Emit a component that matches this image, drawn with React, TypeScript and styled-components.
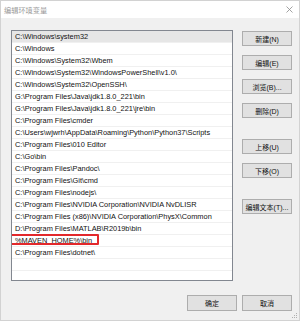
import React from 'react';
import styled, { createGlobalStyle } from 'styled-components';

const GlobalStyle = createGlobalStyle`
  html, body {
    margin: 0;
    padding: 0;
    background: #ffffff;
  }
  * {
    box-sizing: border-box;
  }
`;

const paths = [
  'C:\\Windows\\system32',
  'C:\\Windows',
  'C:\\Windows\\System32\\Wbem',
  'C:\\Windows\\System32\\WindowsPowerShell\\v1.0\\',
  'C:\\Windows\\System32\\OpenSSH\\',
  'G:\\Program Files\\Java\\jdk1.8.0_221\\bin',
  'G:\\Program Files\\Java\\jdk1.8.0_221\\jre\\bin',
  'C:\\Program Files\\cmder',
  'C:\\Users\\wjwrh\\AppData\\Roaming\\Python\\Python37\\Scripts',
  'C:\\Program Files\\010 Editor',
  'C:\\Go\\bin',
  'C:\\Program Files\\Pandoc\\',
  'C:\\Program Files\\Git\\cmd',
  'C:\\Program Files\\nodejs\\',
  'C:\\Program Files\\NVIDIA Corporation\\NVIDIA NvDLISR',
  'C:\\Program Files (x86)\\NVIDIA Corporation\\PhysX\\Common',
  'D:\\Program Files\\MATLAB\\R2019b\\bin',
  '%MAVEN_HOME%\\bin',
  'C:\\Program Files\\dotnet\\',
  '',
  ''
];

const Window = styled.div`
  position: relative;
  width: 300px;
  height: 321px;
  display: flex;
  flex-direction: column;
  background: #f0f0f0;
  border: 1px solid #d2d2d2;
  font-family: 'Liberation Sans', 'Noto Sans CJK SC', sans-serif;
  font-size: 7.4px;
  color: #111111;
`;

const TitleBar = styled.div`
  height: 17px;
  flex: none;
  display: flex;
  align-items: center;
  justify-content: space-between;
  padding: 0 6px 0 3px;
  background: #ffffff;
`;

const Title = styled.span`
  color: #9a9a9a;
  font-size: 7.2px;
`;

const Body = styled.div`
  flex: 1;
  display: flex;
  flex-direction: column;
  padding: 12px 7px 0 10px;
`;

const Main = styled.div`
  display: flex;
  gap: 9px;
`;

const ListBox = styled.div`
  width: 222px;
  height: 251px;
  flex: none;
  background: #ffffff;
  border: 1px solid #828790;
  overflow: hidden;
`;

const Row = styled.div<{ $selected?: boolean }>`
  position: relative;
  height: 12px;
  display: flex;
  align-items: center;
  padding-left: 3px;
  white-space: nowrap;
  background: ${({ $selected }) => ($selected ? '#e6e6e6' : '#ffffff')};
  border-bottom: 1px solid #f0f0f0;
`;

const Highlight = styled.span`
  position: absolute;
  left: -3px;
  top: -1px;
  width: 90px;
  height: 11px;
  border: 2px solid #e3282b;
  border-radius: 1px;
  pointer-events: none;
`;

const ButtonColumn = styled.div`
  width: 50px;
  display: flex;
  flex-direction: column;
  padding-top: 1px;
`;

const Button = styled.button<{ $spaced?: boolean }>`
  height: 15px;
  width: 50px;
  margin-top: ${({ $spaced }) => ($spaced ? '21px' : '9px')};
  padding: 0;
  background: #e1e1e1;
  border: 1px solid #adadad;
  font-family: inherit;
  font-size: 7px;
  color: #111111;
  &:first-child {
    margin-top: 0;
  }
`;

const Footer = styled.div`
  display: flex;
  justify-content: flex-end;
  gap: 5px;
  margin-top: 14px;
`;

const FooterButton = styled(Button)`
  height: 16px;
  margin-top: 0;
`;

const Grip = styled.svg`
  position: absolute;
  right: 1px;
  bottom: 1px;
`;

const CloseIcon = () => (
  <svg width="7" height="7" viewBox="0 0 7 7">
    <path d="M0.5 0.5 L6.5 6.5 M6.5 0.5 L0.5 6.5" stroke="#8c8c8c" strokeWidth="0.8" />
  </svg>
);

const App: React.FC = () => {
  return (
    <>
      <GlobalStyle />
      <Window>
        <TitleBar>
          <Title>编辑环境变量</Title>
          <CloseIcon />
        </TitleBar>
        <Body>
          <Main>
            <ListBox>
              {paths.map((p, i) => (
                <Row key={i} $selected={i === 0}>
                  {p}
                  {i === 17 && <Highlight />}
                </Row>
              ))}
            </ListBox>
            <ButtonColumn>
              <Button>新建(N)</Button>
              <Button>编辑(E)</Button>
              <Button>浏览(B)...</Button>
              <Button>删除(D)</Button>
              <Button $spaced>上移(U)</Button>
              <Button>下移(O)</Button>
              <Button $spaced>编辑文本(T)...</Button>
            </ButtonColumn>
          </Main>
          <Footer>
            <FooterButton>确定</FooterButton>
            <FooterButton>取消</FooterButton>
          </Footer>
        </Body>
        <Grip width="6" height="6" viewBox="0 0 6 6">
          <rect x="4" y="0" width="1" height="1" fill="#b0b0b0" />
          <rect x="2" y="2" width="1" height="1" fill="#b0b0b0" />
          <rect x="4" y="2" width="1" height="1" fill="#b0b0b0" />
          <rect x="0" y="4" width="1" height="1" fill="#b0b0b0" />
          <rect x="2" y="4" width="1" height="1" fill="#b0b0b0" />
          <rect x="4" y="4" width="1" height="1" fill="#b0b0b0" />
        </Grip>
      </Window>
    </>
  );
};

export default App;
